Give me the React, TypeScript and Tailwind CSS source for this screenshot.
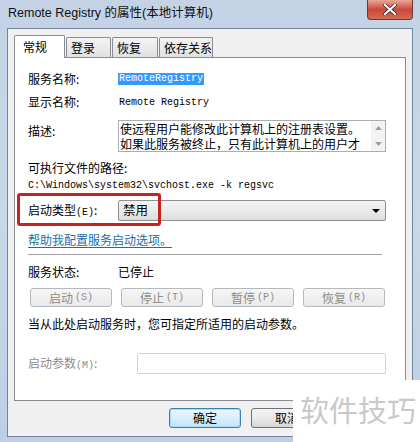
const cjk = "font-['Noto_Sans_CJK_SC',sans-serif]";
const mono = "font-['Liberation_Mono','Noto_Sans_CJK_SC',monospace]";

const tabs = [
  { label: "登录", w: "w-[45px]" },
  { label: "恢复", w: "w-[46px]" },
  { label: "依存关系", w: "w-[54px]" },
];

const actions = [
  { label: "启动", key: "S" },
  { label: "停止", key: "T" },
  { label: "暂停", key: "P" },
  { label: "恢复", key: "R" },
];

function DisabledButton({ label, hotkey }: { label: string; hotkey: string }) {
  return (
    <div className="w-[82px] h-[19px] rounded-[3px] border border-[#b5b9bd] bg-gradient-to-b from-[#f6f6f6] to-[#e9e9e9] flex items-center justify-center text-[12px] text-[#8d8d8d]">
      <span className={cjk}>{label}</span>
      <span className={`${mono} text-[10px] ml-[2px]`}>({hotkey})</span>
    </div>
  );
}

export default function App() {
  return (
    <div
      className={`relative w-[420px] h-[442px] overflow-hidden flex flex-col bg-gradient-to-b from-[#c3d3e5] via-[#c9d8e9] to-[#bccfe4] ${cjk}`}
    >
      {/* title bar */}
      <div className="h-[28px] flex items-center pl-[8px] pb-[1px]">
        <span className="text-[12.5px] text-[#111] font-['Liberation_Sans','Noto_Sans_CJK_SC',sans-serif]">
          Remote Registry 的属性(本地计算机)
        </span>
      </div>
      <div className="absolute top-0 right-[7px] w-[46px] h-[20px] rounded-b-[4px] border border-t-0 border-[#6b3a34] bg-gradient-to-b from-[#e6a598] via-[#c9493a] to-[#d66a52] flex items-center justify-center">
        <svg width="14" height="11" viewBox="0 0 14 11">
          <path d="M2 1 L12 10 M12 1 L2 10" stroke="#3b1a16" strokeWidth="3.6" strokeLinecap="square" />
          <path d="M2 1 L12 10 M12 1 L2 10" stroke="#ffffff" strokeWidth="2.2" strokeLinecap="square" />
        </svg>
      </div>

      {/* dialog body */}
      <div className="flex-1 mx-[7px] mb-[5px] border border-[#71859c] bg-[#f0f0f0] flex flex-col px-[6px] pt-[5px]">
        {/* tabs */}
        <div className="flex items-end h-[23px] relative z-10">
          <div className="w-[51px] h-[23px] -mb-px bg-white border border-b-0 border-[#898c95] rounded-t-[2px] flex items-center pl-[8px] text-[12px] text-black">
            常规
          </div>
          {tabs.map((t) => (
            <div
              key={t.label}
              className={`${t.w} h-[20px] ml-[1px] pl-[4px] bg-gradient-to-b from-[#f4f4f4] to-[#e1e1e1] border border-b-0 border-[#898c95] rounded-t-[2px] flex items-center text-[12px] text-black`}
            >
              {t.label}
            </div>
          ))}
        </div>

        {/* tab panel */}
        <div className="h-[344px] border border-[#898c95] bg-white pl-[13px] pt-[13px] text-[12px] text-black">
          <div className="h-[16px] flex items-center">
            <span className="w-[90px]">服务名称:</span>
            <span className={`${mono} text-[10px] leading-[12px] bg-[#3399ff] text-white px-[1px]`}>RemoteRegistry</span>
          </div>
          <div className="mt-[7px] h-[16px] flex items-center">
            <span className="w-[90px]">显示名称:</span>
            <span className={`${mono} text-[10px] pl-[1px]`}>Remote Registry</span>
          </div>
          <div className="mt-[10px] h-[32px] flex items-start">
            <span className="w-[90px] pt-[2px]">描述:</span>
            <div className="w-[268px] h-[32px] border border-[#abadb3] flex">
              <div className="flex-1 text-[12px] leading-[15px] pl-[1px] overflow-hidden">
                <div>使远程用户能修改此计算机上的注册表设置。</div>
                <div>如果此服务被终止，只有此计算机上的用户才</div>
              </div>
              <div className="w-[14px] bg-[#f3f3f3] flex flex-col items-center justify-between py-[5px]">
                <svg width="7" height="4" viewBox="0 0 7 4"><path d="M0 4 L3.5 0 L7 4 Z" fill="#a0a0a0" /></svg>
                <svg width="7" height="4" viewBox="0 0 7 4"><path d="M0 0 L3.5 4 L7 0 Z" fill="#a0a0a0" /></svg>
              </div>
            </div>
          </div>
          <div className="mt-[8px] h-[16px] flex items-center">可执行文件的路径:</div>
          <div className={`mt-[1px] h-[16px] flex items-center ${mono} text-[10px]`}>
            C:\Windows\system32\svchost.exe -k regsvc
          </div>
          <div className="mt-[7px] h-[21px] flex items-center relative">
            <span className="w-[90px]">
              启动类型<span className={`${mono} text-[10px]`}>(E)</span>:
            </span>
            <div className="w-[268px] h-[21px] rounded-[2px] border border-[#8e8f8f] bg-gradient-to-b from-[#f3f3f3] via-[#ebebeb] to-[#dcdcdc] flex items-center justify-between pl-[4px] pr-[5px]">
              <span className="text-[12.5px]">禁用</span>
              <svg width="8" height="4" viewBox="0 0 8 4"><path d="M0 0 L8 0 L4 4 Z" fill="#000" /></svg>
            </div>
            <div className="absolute left-[-11px] top-[-7px] w-[144px] h-[33px] rounded-[3px] border-[3px] border-[#c8231f] pointer-events-none" />
          </div>
          <div className="mt-[11px] h-[16px] flex items-center">
            <span className="text-[#1c6ea5] underline underline-offset-2">帮助我配置服务启动选项。</span>
          </div>
          <div className="mt-[6px] w-[354px] h-px bg-[#a0a0a0]" />
          <div className="mt-[9px] h-[16px] flex items-center">
            <span className="w-[90px]">服务状态:</span>
            <span>已停止</span>
          </div>
          <div className="mt-[8px] ml-[2px] flex gap-[9px]">
            {actions.map((a) => (
              <DisabledButton key={a.key} label={a.label} hotkey={a.key} />
            ))}
          </div>
          <div className="mt-[9px] h-[16px] flex items-center">当从此处启动服务时，您可指定所适用的启动参数。</div>
          <div className="mt-[21px] h-[21px] flex items-center">
            <span className="w-[109px] text-[#8d8d8d]">
              启动参数<span className={`${mono} text-[10px]`}>(M)</span>:
            </span>
            <div className="w-[249px] h-[21px] rounded-[2px] border border-[#cfd2d6] bg-white" />
          </div>
        </div>

        {/* footer buttons */}
        <div className="mt-[7px] flex pl-[155px] gap-[10px]">
          <div className="w-[72px] h-[20px] rounded-[3px] border border-[#3c7fb1] bg-gradient-to-b from-[#eaf6fd] via-[#d9f0fc] to-[#bee6fd] shadow-[inset_0_0_0_1px_#a6dbf8] flex items-center justify-center text-[12px]">
            确定
          </div>
          <div className="w-[72px] h-[20px] rounded-[3px] border border-[#707070] bg-gradient-to-b from-[#f2f2f2] via-[#ebebeb] to-[#d6d6d6] flex items-center justify-center text-[12px]">
            取消
          </div>
        </div>
      </div>

      {/* watermark */}
      <div className="absolute right-0 bottom-0 w-[127px] h-[62px] bg-white flex items-start pl-[7px] pt-[14px]">
        <span className="text-[29px] leading-[30px] text-[#c9c9c9]">软件技巧</span>
      </div>
    </div>
  );
}
